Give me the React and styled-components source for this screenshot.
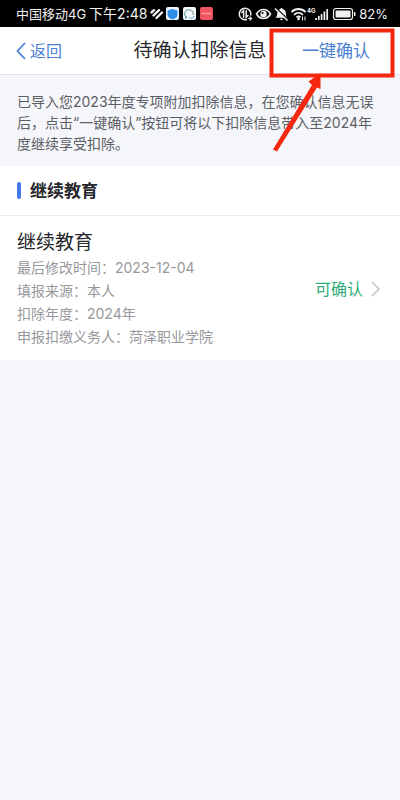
import React from 'react';
import styled, { createGlobalStyle } from 'styled-components';

const GlobalStyle = createGlobalStyle`
	* {
		box-sizing: border-box;
	}

	body {
		margin: 0;

		background-color: #f5f6fa;
		color: #26272b;
		font-family: Inter, 'Noto Sans CJK SC', sans-serif;
	}

	h1,
	h2,
	h3,
	p,
	dl,
	dd {
		margin: 0;
	}
`;

const Screen = styled.div`
	position: relative;
`;

const StatusBar = styled.div`
	display: flex;
	justify-content: space-between;
	align-items: center;

	height: 27px;
	padding: 0 12px 0 16px;

	background-color: #000;
	color: #f2f2f2;
	white-space: nowrap;
`;

const StatusGroup = styled.div`
	display: flex;
	align-items: center;
	gap: 3px;
`;

const StatusText = styled.span`
	font-size: ${({ size }) => size}px;
	line-height: 20px;
`;

const Header = styled.header`
	display: grid;
	grid-template-columns: 1fr auto 1fr;
	align-items: center;

	height: 48px;
	padding: 0 16px;
	border-bottom: 1px solid #e2e3ea;

	background-color: #fff;
`;

const PageTitle = styled.h1`
	font-weight: 400;
	font-size: 19px;
	line-height: 28px;
`;

const HeaderButton = styled.button`
	display: flex;
	align-items: center;
	justify-self: ${({ side }) => (side === 'left' ? 'start' : 'end')};
	gap: 4px;

	padding: 0 ${({ side }) => (side === 'left' ? 0 : 14)}px 0 0;
	border: 0;

	background: none;
	color: #4a80d2;
	font-family: inherit;
	font-size: ${({ side }) => (side === 'left' ? 16 : 17)}px;
	line-height: 24px;
	white-space: nowrap;
	cursor: pointer;
`;

const Notice = styled.p`
	padding: 16px 17px 12px;

	color: #5c5e66;
	font-size: 14px;
	line-height: 21px;
`;

const SectionTitle = styled.h2`
	display: flex;
	align-items: center;
	gap: 9px;

	height: 50px;
	padding: 0 17px;
	border-bottom: 1px solid #ececf0;

	background-color: #fff;
	font-weight: 700;
	font-size: 17px;
	line-height: 24px;

	&::before {
		content: '';

		width: 4px;
		height: 17px;
		border-radius: 2px;

		background-color: #4678ea;
	}
`;

const Item = styled.article`
	display: flex;
	justify-content: space-between;
	align-items: center;

	padding: 14px 19px 12px 17px;

	background-color: #fff;
`;

const ItemTitle = styled.h3`
	font-weight: 400;
	font-size: 19px;
	line-height: 26px;
`;

const Details = styled.dl`
	color: #97989c;
	font-size: 14px;
	line-height: 23px;
`;

const DetailRow = styled.div`
	display: flex;
`;

const ItemStatus = styled.button`
	display: flex;
	align-items: center;
	gap: 8px;

	padding: 0;
	border: 0;

	background: none;
	color: #2fad79;
	font-family: inherit;
	font-size: 16px;
	line-height: 24px;
	white-space: nowrap;
	cursor: pointer;
`;

const Marker = styled.svg`
	position: absolute;
	top: 27px;
	right: 4px;

	pointer-events: none;
`;

const details = [
	['最后修改时间：', '2023-12-04'],
	['填报来源：', '本人'],
	['扣除年度：', '2024年'],
	['申报扣缴义务人：', '菏泽职业学院'],
];

function LeftIcons() {
	return (
		<svg width="64" height="14" viewBox="0 0 64 14" aria-hidden="true">
			<g stroke="#f2f2f2" strokeWidth="2.4" strokeLinecap="round" fill="none">
				<path d="M1.500 5.500 4 3.200M3.500 8.500 9 3.200M6.500 11 12 5.500" />
			</g>
			<rect x="16" y="0" width="13" height="13" rx="2" fill="#eaf6ff" />
			<path d="M22.5 2 27.500 3.500v4c0 2.500-2 4-5 5-3-1-5-2.500-5-5v-4z" fill="#2f8eea" />
			<rect x="33" y="0" width="13" height="13" rx="2" fill="#f4faf8" />
			<path
				d="M37 10.500a4.300 4 0 1 1 6-2.500M37 10.500l-1.500.5.500-1.800"
				fill="none"
				stroke="#5b8f9a"
				strokeWidth="1"
			/>
			<path d="M39.500 10.500c1.500 1.500 4 1 4.500-1.500" fill="none" stroke="#3c9edb" />
			<rect x="50" y="0" width="13" height="13" rx="2" fill="#ef5662" />
			<path d="M52 6.500h9" stroke="#f9a5aa" strokeWidth="1.5" strokeDasharray="2 .5" />
		</svg>
	);
}

function RightIcons() {
	return (
		<svg width="118" height="16" viewBox="0 0 118 16" aria-hidden="true">
			<g fill="none" stroke="#f2f2f2" strokeWidth="1.5" strokeLinecap="round">
				<path d="M8.500 13.600A5.800 5.800 0 1 1 12.800 9" />
				<path d="M3.800 6.500 5.600 4.700v6.500M8.200 4.700v6.500l1.800-1.700" />
				<path d="M10.500 12.500h2.800M12 11l1.500 1.500-1.500 1.500" strokeWidth="1.2" />
			</g>
			<path
				d="M18.500 8c3.500-6 10.500-6 14 0-3.500 6-10.500 6-14 0z"
				fill="none"
				stroke="#f2f2f2"
				strokeWidth="1.6"
			/>
			<circle cx="25.5" cy="8" r="3.2" fill="#f2f2f2" />
			<circle cx="24.5" cy="7" r="1" fill="#000" />
			<path
				d="M37.500 11.800c1.700-1.300 1.500-3 1.800-5 .4-2 1.500-3.200 3-3.700.4-1.500 2-1.500 2.400 0 2.300.7 3.200 2.500 3.200 4.600 0 2 .4 3 1.600 4.100zM41.800 12.800h3.400c-.5 1.800-2.900 1.800-3.400 0z"
				fill="#f2f2f2"
			/>
			<path d="M38 2 50 13.500" stroke="#000" strokeWidth="1.6" />
			<path d="M37 2.500 49.500 14.500" stroke="#f2f2f2" strokeWidth="1.5" />
			<g fill="none" stroke="#f2f2f2" strokeWidth="1.8">
				<path d="M53.500 6c4-4 10-4 14 0M56 8.800c2.700-2.600 6.300-2.600 9 0" />
				<path d="M58.500 11.400c1.300-1.200 2.700-1.200 4 0" />
			</g>
			<circle cx="60.5" cy="13" r="1.3" fill="#f2f2f2" />
			<path d="M64.500 10.500v4M67 14.500v-4" stroke="#f2f2f2" />
			<text x="69" y="7" fill="#f2f2f2" fontSize="6" fontWeight="700">
				4G
			</text>
			<path
				d="M78 14v-2M80.800 14v-4M83.600 14V8M86.400 14V5.500M89.200 14V3"
				stroke="#f2f2f2"
				strokeWidth="1.7"
			/>
			<rect x="95.500" y="2.500" width="19" height="11" rx="2.500" fill="none" stroke="#f2f2f2" strokeWidth="1.2" />
			<rect x="97.500" y="4.500" width="15" height="7" rx="1" fill="#f2f2f2" />
			<path d="M116.700 6v4" stroke="#f2f2f2" strokeWidth="1.5" />
		</svg>
	);
}

export default function App() {
	return (
		<Screen lang="zh-CN">
			<GlobalStyle />
			<StatusBar>
				<StatusGroup>
					<StatusText size={13}>中国移动4G</StatusText>
					<StatusText size={14}>下午2:48</StatusText>
					<LeftIcons />
				</StatusGroup>
				<StatusGroup>
					<RightIcons />
					<StatusText size={13}>82%</StatusText>
				</StatusGroup>
			</StatusBar>
			<Header>
				<HeaderButton side="left" type="button">
					<svg width="10" height="18" viewBox="0 0 10 18" aria-hidden="true">
						<path d="M9 1 1.500 9 9 17" fill="none" stroke="#4a80d2" strokeWidth="1.8" />
					</svg>
					返回
				</HeaderButton>
				<PageTitle>待确认扣除信息</PageTitle>
				<HeaderButton side="right" type="button">
					一键确认
				</HeaderButton>
			</Header>
			<main>
				<Notice>
					已导入您2023年度专项附加扣除信息，在您确认信息无误后，点击“一键确认”按钮可将以下扣除信息带入至2024年度继续享受扣除。
				</Notice>
				<SectionTitle>继续教育</SectionTitle>
				<Item>
					<div>
						<ItemTitle>继续教育</ItemTitle>
						<Details>
							{details.map(([label, value]) => (
								<DetailRow key={label}>
									<dt>{label}</dt>
									<dd>{value}</dd>
								</DetailRow>
							))}
						</Details>
					</div>
					<ItemStatus type="button">
						可确认
						<svg width="10" height="16" viewBox="0 0 10 16" aria-hidden="true">
							<path d="M1 1l7 7-7 7" fill="none" stroke="#c4c5c9" strokeWidth="1.5" />
						</svg>
					</ItemStatus>
				</Item>
			</main>
			<Marker width="128" height="126" viewBox="268 27 128 126" aria-hidden="true">
				<rect x="271.500" y="30.500" width="121" height="45" fill="none" stroke="#f5270f" strokeWidth="4" />
				<path d="M273 149.500 312 85 308.500 81.500 320.500 73 320.500 89 317 87.500 277 151.500z" fill="#f5270f" />
			</Marker>
		</Screen>
	);
}
